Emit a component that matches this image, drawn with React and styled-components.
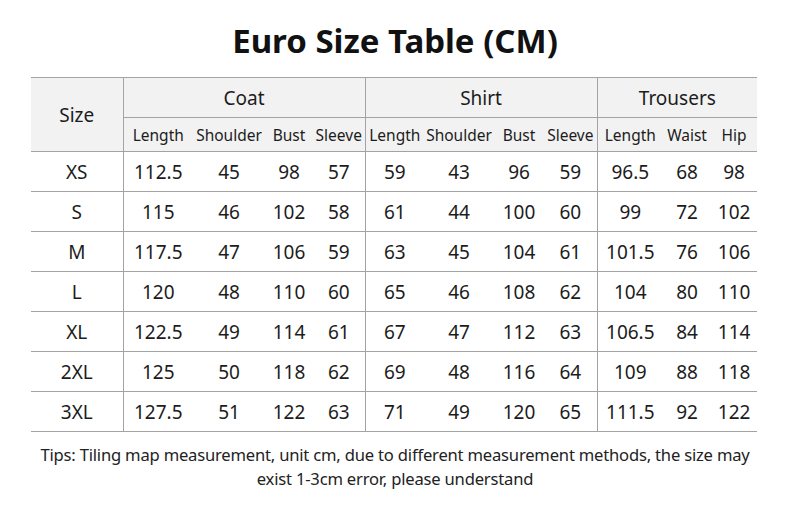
import React from "react";
import styled, { createGlobalStyle } from "styled-components";

const GlobalStyle = createGlobalStyle`
  body {
    margin: 0;
    background: #ffffff;
    font-family: "Noto Sans", "Open Sans", sans-serif;
    color: #1c1c1c;
  }
`;

const groups = [
  { name: "Coat", cols: [["Length", 70], ["Shoulder", 72], ["Bust", 48], ["Sleeve", 52]] },
  { name: "Shirt", cols: [["Length", 59], ["Shoulder", 70], ["Bust", 50], ["Sleeve", 53]] },
  { name: "Trousers", cols: [["Length", 66], ["Waist", 48], ["Hip", 46]] },
];

const rows = [
  ["XS", "112.5", 45, 98, 57, 59, 43, 96, 59, "96.5", 68, 98],
  ["S", 115, 46, 102, 58, 61, 44, 100, 60, 99, 72, 102],
  ["M", "117.5", 47, 106, 59, 63, 45, 104, 61, "101.5", 76, 106],
  ["L", 120, 48, 110, 60, 65, 46, 108, 62, 104, 80, 110],
  ["XL", "122.5", 49, 114, 61, 67, 47, 112, 63, "106.5", 84, 114],
  ["2XL", 125, 50, 118, 62, 69, 48, 116, 64, 109, 88, 118],
  ["3XL", "127.5", 51, 122, 63, 71, 49, 120, 65, "111.5", 92, 122],
];

// columns that start a new group get a left rule
const groupStarts = [1, 5, 9];

const Page = styled.div`
  width: 790px;
`;

const Title = styled.h1`
  margin: 0;
  height: 77px;
  display: flex;
  align-items: center;
  justify-content: center;
  padding-top: 3px;
  box-sizing: border-box;
  font-size: 33px;
  font-weight: 700;
  color: #111;
`;

const Table = styled.table`
  margin-left: 31px;
  width: 726px;
  border-collapse: collapse;
  table-layout: fixed;
  border-top: 1px solid #a3a3a3;
`;

const HeadCell = styled.th`
  height: ${(p) => p.$h}px;
  padding: 0;
  background: #f2f2f2;
  font-weight: 400;
  font-size: ${(p) => (p.$small ? "15.5px" : "19px")};
  color: #1c1c1c;
  text-align: center;
  white-space: nowrap;
  border-bottom: 1px solid #a3a3a3;
  border-left: ${(p) => (p.$rule ? "1px solid #a3a3a3" : "none")};
`;

const Cell = styled.td`
  height: 39px;
  padding: 0;
  font-size: 19px;
  text-align: center;
  white-space: nowrap;
  border-bottom: 1px solid #a3a3a3;
  border-left: ${(p) => (p.$rule ? "1px solid #a3a3a3" : "none")};
`;

const Tips = styled.p`
  margin: 11px 0 0;
  text-align: center;
  font-size: 16.6px;
  line-height: 24px;
  color: #222;
  letter-spacing: -0.2px;
`;

export default function App() {
  return (
    <Page>
      <GlobalStyle />
      <Title>Euro Size Table (CM)</Title>
      <Table>
        <colgroup>
          <col style={{ width: 92 }} />
          {groups.flatMap((g) =>
            g.cols.map(([label, w]) => <col key={g.name + label} style={{ width: w }} />)
          )}
        </colgroup>
        <thead>
          <tr>
            <HeadCell rowSpan={2} $h={39}>Size</HeadCell>
            {groups.map((g) => (
              <HeadCell key={g.name} colSpan={g.cols.length} $h={39} $rule>
                {g.name}
              </HeadCell>
            ))}
          </tr>
          <tr>
            {groups.flatMap((g) =>
              g.cols.map(([label], i) => (
                <HeadCell key={g.name + label} $h={33} $small $rule={i === 0}>
                  {label}
                </HeadCell>
              ))
            )}
          </tr>
        </thead>
        <tbody>
          {rows.map((row) => (
            <tr key={row[0]}>
              {row.map((v, i) => (
                <Cell key={i} $rule={groupStarts.includes(i)}>
                  {v}
                </Cell>
              ))}
            </tr>
          ))}
        </tbody>
      </Table>
      <Tips>
        Tips: Tiling map measurement, unit cm, due to different measurement methods, the size may
        <br />
        exist 1-3cm error, please understand
      </Tips>
    </Page>
  );
}
